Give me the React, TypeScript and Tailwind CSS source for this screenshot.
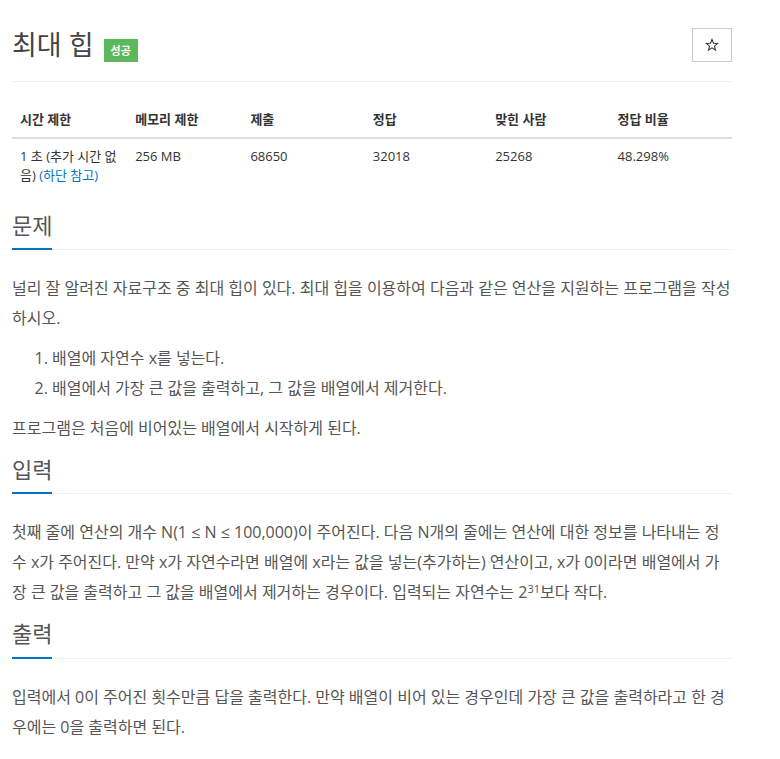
const font = { fontFamily: '"Open Sans", "Noto Sans CJK KR", sans-serif' }

function StarButton() {
  return (
    <button className="flex h-[34px] w-[40px] items-center justify-center border border-[#ccc] bg-white">
      <svg width="14" height="14" viewBox="0 0 24 24" fill="none" stroke="#333" strokeWidth="1.8" strokeLinejoin="miter">
        <path d="M12 2.5l2.6 6.6 7 .4-5.4 4.5 1.8 6.9L12 17l-6 3.9 1.8-6.9-5.4-4.5 7-.4z" />
      </svg>
    </button>
  )
}

function Headline({ title }: { title: string }) {
  return (
    <div className="border-b border-dotted border-[#dfe3e8]">
      <h2 className="-mb-px inline-block border-b-2 border-[#0076c0] pb-[11px] text-[22px] leading-[1.1] font-normal text-[#555]">
        {title}
      </h2>
    </div>
  )
}

const stats = [
  { label: "시간 제한", w: "w-[16%]" },
  { label: "메모리 제한", w: "w-[16%]" },
  { label: "제출", w: "w-[17%]" },
  { label: "정답", w: "w-[17%]" },
  { label: "맞힌 사람", w: "w-[17%]" },
  { label: "정답 비율", w: "w-[17%]" },
]

export default function App() {
  return (
    <div className="min-h-[759px] bg-white text-[#333]" style={font}>
      <div className="mx-[12px] flex w-[720px] flex-col">
        {/* 제목 */}
        <div className="flex items-center justify-between border-b border-[#eee] pt-[27px] pb-[19px]">
          <div className="flex items-center">
            <h1 className="text-[27px] leading-[34px] font-normal text-[#444]">최대 힙</h1>
            <span className="mt-[12px] ml-[10px] bg-[#5cb85c] px-[7px] py-[4px] text-[11px] leading-[15px] font-bold text-white">
              성공
            </span>
          </div>
          <StarButton />
        </div>

        {/* 제한 정보 */}
        <table className="mt-[20px] mb-[20px] w-full table-fixed border-collapse text-[13px] leading-[19px]">
          <thead>
            <tr className="border-b-2 border-[#ddd]">
              {stats.map((s) => (
                <th key={s.label} className={`${s.w} p-[8px] text-left font-bold`}>
                  {s.label}
                </th>
              ))}
            </tr>
          </thead>
          <tbody>
            <tr>
              <td className="p-[8px] align-top break-all">
                1 초 (추가 시간 없음) <a className="text-[#0076c0]">(하단 참고)</a>
              </td>
              <td className="p-[8px] align-top">256 MB</td>
              <td className="p-[8px] align-top">68650</td>
              <td className="p-[8px] align-top">32018</td>
              <td className="p-[8px] align-top">25268</td>
              <td className="p-[8px] align-top">48.298%</td>
            </tr>
          </tbody>
        </table>

        <div className="flex flex-col gap-[14px] text-[16px] leading-[30px] text-[#555]">
          <section>
            <Headline title="문제" />
            <div className="mt-[23px] flex flex-col gap-[10px]">
              <p>
                널리 잘 알려진 자료구조 중 최대 힙이 있다. 최대 힙을 이용하여 다음과 같은 연산을 지원하는 프로그램을 작성하시오.
              </p>
              <ol className="list-decimal pl-[40px]">
                <li>배열에 자연수 x를 넣는다.</li>
                <li>배열에서 가장 큰 값을 출력하고, 그 값을 배열에서 제거한다.</li>
              </ol>
              <p>프로그램은 처음에 비어있는 배열에서 시작하게 된다.</p>
            </div>
          </section>

          <section>
            <Headline title="입력" />
            <div className="mt-[23px]">
              <p>
                첫째 줄에 연산의 개수 N(1 ≤ N ≤ 100,000)이 주어진다. 다음 N개의 줄에는 연산에 대한 정보를 나타내는 정수 x가 주어진다. 만약 x가 자연수라면 배열에 x라는 값을 넣는(추가하는) 연산이고, x가 0이라면 배열에서 가장 큰 값을 출력하고 그 값을 배열에서 제거하는 경우이다. 입력되는 자연수는 2
                <sup className="text-[11px]">31</sup>보다 작다.
              </p>
            </div>
          </section>

          <section>
            <Headline title="출력" />
            <div className="mt-[23px]">
              <p>
                입력에서 0이 주어진 횟수만큼 답을 출력한다. 만약 배열이 비어 있는 경우인데 가장 큰 값을 출력하라고 한 경우에는 0을 출력하면 된다.
              </p>
            </div>
          </section>
        </div>
      </div>
    </div>
  )
}
